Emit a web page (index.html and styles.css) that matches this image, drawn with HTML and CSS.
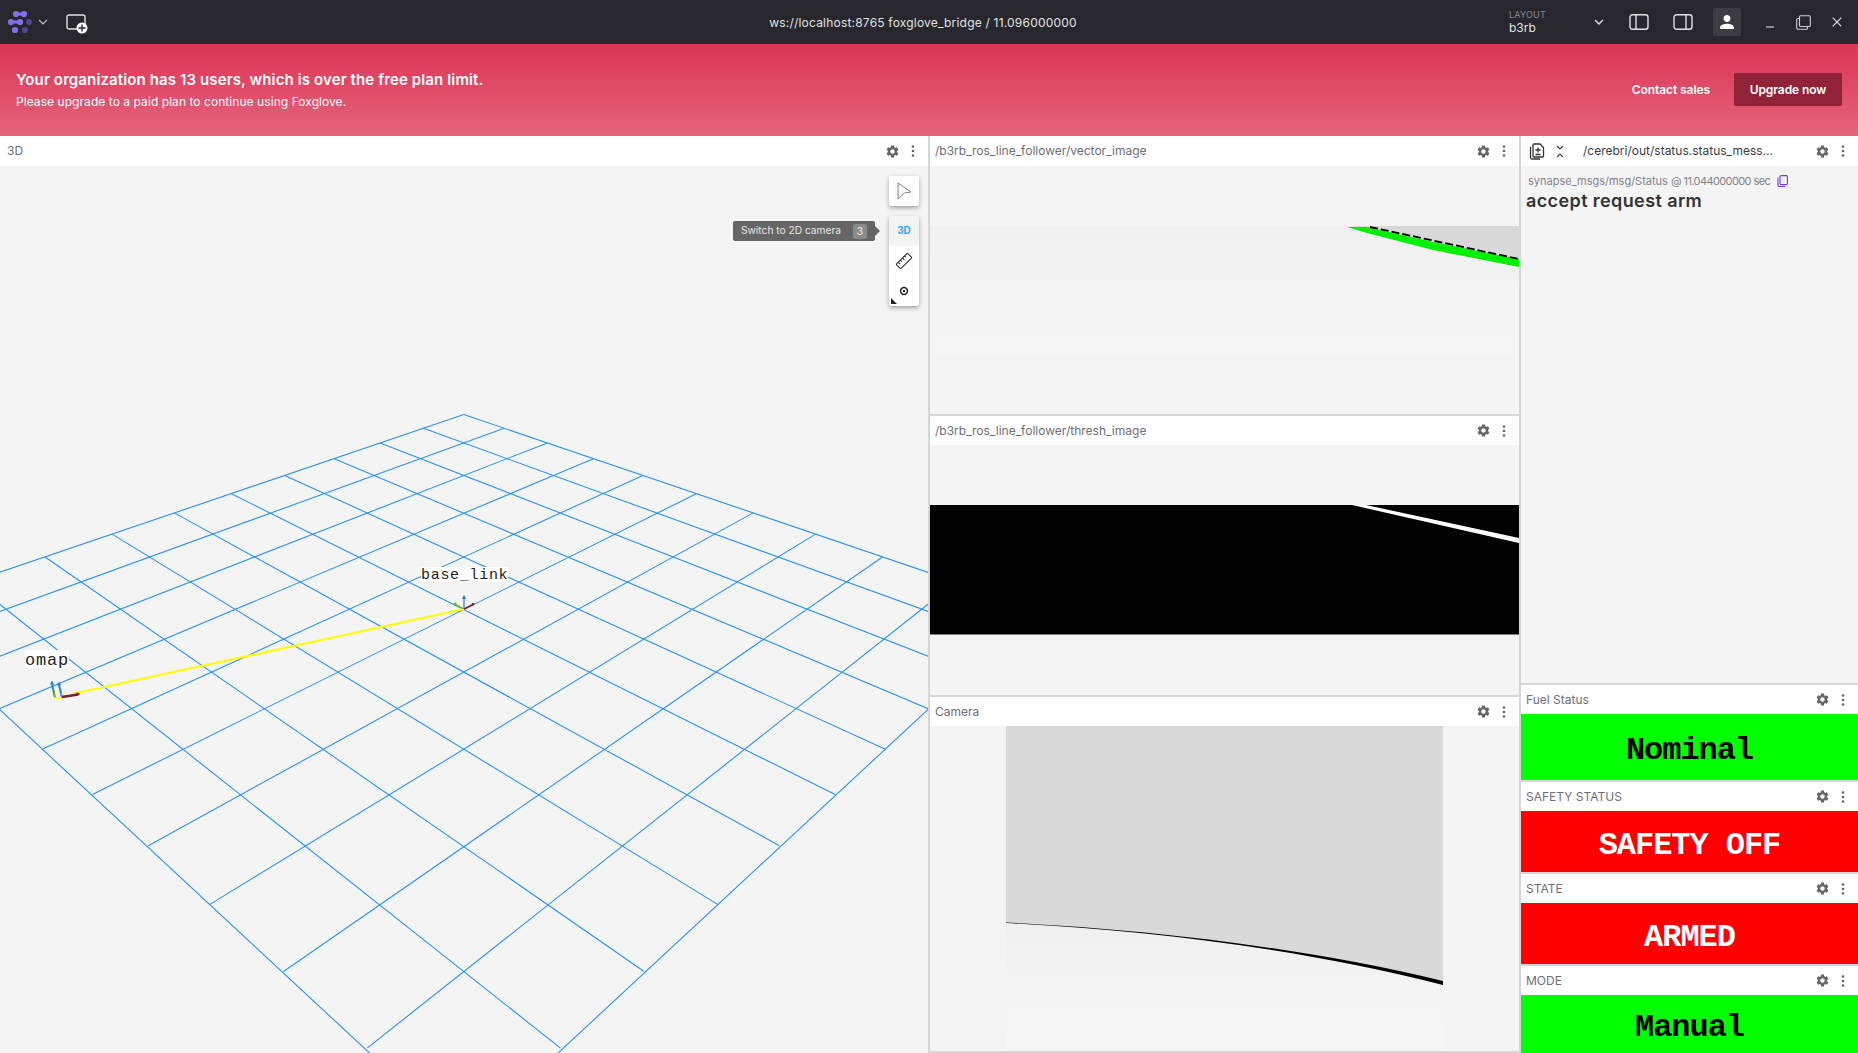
FILE: index.html
```html
<!DOCTYPE html>
<html lang="en">
<head>
  <meta charset="UTF-8">
  <meta name="viewport" content="width=device-width, initial-scale=1.0">
  <title>Foxglove</title>
  <link rel="stylesheet" href="styles.css">
</head>
<body>
  <svg class="defs" width="0" height="0">
    <symbol id="gear" viewBox="0 0 24 24">
      <path d="M19.14 12.94c.04-.3.06-.61.06-.94 0-.32-.02-.64-.07-.94l2.03-1.58c.18-.14.23-.41.12-.61l-1.92-3.32c-.12-.22-.37-.29-.59-.22l-2.39.96c-.5-.38-1.03-.7-1.62-.94l-.36-2.54c-.04-.24-.24-.41-.48-.41h-3.84c-.24 0-.43.17-.47.41l-.36 2.54c-.59.24-1.13.57-1.62.94l-2.39-.96c-.22-.08-.47 0-.59.22L2.74 8.87c-.12.21-.08.47.12.61l2.03 1.58c-.05.3-.09.63-.09.94s.02.64.07.94l-2.03 1.58c-.18.14-.23.41-.12.61l1.92 3.32c.12.22.37.29.59.22l2.39-.96c.5.38 1.03.7 1.62.94l.36 2.54c.05.24.24.41.48.41h3.84c.24 0 .44-.17.47-.41l.36-2.54c.59-.24 1.13-.56 1.62-.94l2.39.96c.22.08.47 0 .59-.22l1.92-3.32c.12-.22.07-.47-.12-.61l-2.01-1.58zM12 15.6c-1.98 0-3.6-1.62-3.6-3.6s1.62-3.6 3.6-3.6 3.6 1.62 3.6 3.6-1.62 3.6-3.6 3.6z"/>
    </symbol>
    <symbol id="dots" viewBox="0 0 4 14">
      <circle cx="2" cy="2.5" r="1.3"/><circle cx="2" cy="7" r="1.3"/><circle cx="2" cy="11.5" r="1.3"/>
    </symbol>
  </svg>

  <header class="topbar">
    <div class="topbar-left">
      <svg width="26" height="24" viewBox="0 0 26 24" class="logo">
        <path d="M9 4h8M4 12h9" stroke="#8070ee" stroke-width="3"/>
        <circle cx="9" cy="4" r="3.100" fill="#8070ee"/><circle cx="17" cy="4" r="3.100" fill="#8070ee"/>
        <circle cx="4" cy="12" r="3.100" fill="#8070ee"/><circle cx="13" cy="12" r="3.100" fill="#8070ee"/>
        <circle cx="22" cy="12" r="3" fill="#4f4694"/>
        <circle cx="8" cy="20" r="3.100" fill="#8070ee"/><circle cx="18" cy="20" r="3" fill="#4f4694"/>
      </svg>
      <svg width="10" height="6" viewBox="0 0 10 6" class="chev"><path d="M1 1l4 4 4-4" fill="none" stroke="#bbb" stroke-width="1.2"/></svg>
      <svg width="24" height="20" viewBox="0 0 24 20" class="add-panel">
        <rect x="1" y="1" width="18" height="14" rx="2" fill="none" stroke="#e2e2e2" stroke-width="1.4"/>
        <circle cx="16" cy="14" r="5.5" fill="#fff"/>
        <path d="M16 10.5v7M12.5 14h7" stroke="#27272d" stroke-width="1.4"/>
      </svg>
    </div>
    <div class="conn">ws://localhost:8765 foxglove_bridge / 11.096000000</div>
    <div class="topbar-right">
      <div class="layout-name"><span class="layout-label">LAYOUT</span><span class="layout-value">b3rb</span></div>
      <svg width="10" height="6" viewBox="0 0 10 6" class="layout-chev"><path d="M1 1l4 4 4-4" fill="none" stroke="#e2e2e2" stroke-width="1.4"/></svg>
      <svg width="20" height="16" viewBox="0 0 20 16" class="side-l"><rect x="1" y=".8" width="18" height="14.4" rx="2.5" fill="none" stroke="#e2e2e2" stroke-width="1.4"/><path d="M7 1v14" stroke="#e2e2e2" stroke-width="1.4"/></svg>
      <svg width="20" height="16" viewBox="0 0 20 16" class="side-r"><rect x="1" y=".8" width="18" height="14.4" rx="2.5" fill="none" stroke="#e2e2e2" stroke-width="1.4"/><path d="M13 1v14" stroke="#e2e2e2" stroke-width="1.4"/></svg>
      <div class="user-btn">
        <svg width="18" height="18" viewBox="0 0 24 24"><path fill="#fff" d="M12 12c2.6 0 4.6-2.1 4.6-4.6S14.600 2.800 12 2.800 7.400 4.900 7.400 7.400 9.400 12 12 12zm0 2.300c-3.100 0-9.200 1.500-9.200 4.600v2.300h18.400v-2.300c0-3.100-6.100-4.600-9.200-4.600z"/></svg>
      </div>
      <svg width="10" height="2" viewBox="0 0 10 2" class="win-min"><path d="M1 1h8" stroke="#d0d0d0" stroke-width="1.2"/></svg>
      <svg width="15" height="15" viewBox="0 0 15 15" class="win-max"><rect x="3.500" y=".7" width="10.800" height="10.800" rx="1" fill="none" stroke="#d0d0d0" stroke-width="1.100"/><path d="M3.500 3.500H2A1.300 1.300 0 0 0 .7 4.800V13A1.300 1.300 0 0 0 2 14.300h8.200a1.300 1.300 0 0 0 1.300-1.300v-1.500" fill="none" stroke="#d0d0d0" stroke-width="1.100"/></svg>
      <svg width="10" height="10" viewBox="0 0 10 10" class="win-close"><path d="M.7.7l8.600 8.600M9.300.7L.7 9.300" stroke="#e2e2e2" stroke-width="1.200"/></svg>
    </div>
  </header>

  <section class="banner">
    <div>
      <div class="banner-title">Your organization has 13 users, which is over the free plan limit.</div>
      <div class="banner-sub">Please upgrade to a paid plan to continue using Foxglove.</div>
    </div>
    <div class="banner-actions">
      <span class="contact">Contact sales</span>
      <span class="upgrade">Upgrade now</span>
    </div>
  </section>

  <main class="workspace">
    <div class="col col-3d">
      <div class="panel grow">
        <div class="panel-head tall first-head">
          <span class="panel-title">3D</span>
          <svg class="ic-gear"><use href="#gear"/></svg><svg class="ic-dots"><use href="#dots"/></svg>
        </div>
        <div class="panel-body scene">
          <svg class="grid" width="928" height="887" viewBox="0 0 928 887">
            <g transform="translate(0 234) scale(.5931 .4165)" class="grid-lines">
              <path d="M782 35L-183 502M850 68L-129 574M923 103L-69 653M1000.500 141L-1 741M1084 181L72 838M1174 225L156 947M1270 271L250 1070M1375 322L354 1211M1488 377L478 1372M1612 437L619 1556M1747 502L782 1778"/>
            </g>
            <g transform="translate(0 234) scale(.5931 .4165) translate(1564 0) scale(-1 1)" class="grid-lines">
              <path d="M782 35L-183 502M850 68L-129 574M923 103L-69 653M1000.500 141L-1 741M1084 181L72 838M1174 225L156 947M1270 271L250 1070M1375 322L354 1211M1488 377L478 1372M1612 437L619 1556M1747 502L782 1778"/>
            </g>
            <path d="M72 528L464 443" stroke="#ffff00" stroke-width="2.200"/>
            <path d="M464 443V432" stroke="#1f77d0" stroke-width="1.200"/>
            <path d="M464 443L456 438.500" stroke="#7ab800" stroke-width="1.200"/>
            <path d="M464 443L473 438.500" stroke="#7a2028" stroke-width="1.500"/>
            <path d="M464 429l-2 4h4z" fill="#1f77d0"/>
            <circle cx="455" cy="438" r="1.600" fill="#7ab800"/>
            <path d="M475 437l-3.500 .3 1.500 3z" fill="#7a2028"/>
            <path d="M55 532L52 518M62 532L59 519" stroke="#1f77d0" stroke-width="1.800"/>
            <path d="M55 532L54 524M62 532L61 524" stroke="#7ab800" stroke-width="1.200"/>
            <path d="M54 532h9" stroke="#ffff00" stroke-width="1.500"/>
            <path d="M62 531L78 528.500" stroke="#7a2028" stroke-width="2.500"/>
            <path d="M52 514.500l-2 4h4zM59 515.500l-2 4h4z" fill="#1f77d0"/>
            <path d="M80.500 528l-4-2 .5 4z" fill="#7a2028"/>
          </svg>
          <span class="frame-label label-base">base_link</span>
          <span class="frame-label label-omap">omap</span>

          <div class="tooltip"><span class="tooltip-text">Switch to 2D camera</span><kbd>3</kbd></div>
          <div class="tool-stack">
            <div class="tool-group">
              <div class="tool">
                <svg width="18" height="18" viewBox="0 0 18 18"><path d="M3 1l13 9-6.500 1-6.500 6z" fill="none" stroke="#808080" stroke-width="1"/></svg>
              </div>
            </div>
            <div class="tool-group corner">
              <div class="tool active">3D</div>
              <div class="tool">
                <svg width="18" height="18" viewBox="0 0 18 18"><g transform="rotate(-45 9 9)" fill="none" stroke="#333" stroke-width="1.100"><rect x="1" y="5.800" width="16" height="6.400" rx="1"/><path d="M4 6v2.500M7 6v2M10 6v2.500M13 6v2"/></g></svg>
              </div>
              <div class="tool">
                <svg width="10" height="10" viewBox="0 0 10 10"><circle cx="5" cy="5" r="3.400" fill="none" stroke="#222" stroke-width="1.500"/><path d="M3.800 3.800l2.400 2.400M6.200 3.800L3.800 6.200" stroke="#222" stroke-width="1"/></svg>
              </div>
            </div>
          </div>
        </div>
      </div>
    </div>

    <div class="col col-images">
      <div class="panel p-vector">
        <div class="panel-head tall">
          <span class="panel-title">/b3rb_ros_line_follower/vector_image</span>
          <svg class="ic-gear"><use href="#gear"/></svg><svg class="ic-dots"><use href="#dots"/></svg>
        </div>
        <div class="panel-body">
          <svg width="589" height="248" viewBox="0 0 589 248">
            <defs>
              <linearGradient id="fade" x1="0" y1="0" x2="0" y2="1"><stop offset="0" stop-color="#f0f0f0"/><stop offset=".5" stop-color="#f4f4f4"/><stop offset="1" stop-color="#f5f5f5"/></linearGradient>
            </defs>
            <rect y="60" width="589" height="130" fill="url(#fade)"/>
            <path d="M417 60H589V93z" fill="#d8d8d8"/>
            <path d="M417 61H437L503 76L589 93V101L503 84L437 67z" fill="#00f000"/>
            <path d="M440 61L589 93" stroke="#000" stroke-width="1.800" stroke-dasharray="8 3"/>
          </svg>
        </div>
      </div>
      <div class="panel p-thresh">
        <div class="panel-head">
          <span class="panel-title">/b3rb_ros_line_follower/thresh_image</span>
          <svg class="ic-gear"><use href="#gear"/></svg><svg class="ic-dots"><use href="#dots"/></svg>
        </div>
        <div class="panel-body">
          <svg width="589" height="250" viewBox="0 0 589 250">
            <rect y="60" width="589" height="129.500" fill="#000"/>
            <path d="M436 60L589 93V98L422 60z" fill="#fff"/>
          </svg>
        </div>
      </div>
      <div class="panel grow last">
        <div class="panel-head">
          <span class="panel-title">Camera</span>
          <svg class="ic-gear"><use href="#gear"/></svg><svg class="ic-dots"><use href="#dots"/></svg>
        </div>
        <div class="panel-body center-img">
          <svg width="437" height="325" viewBox="0 0 437 325">
            <defs>
              <linearGradient id="fade2" x1="0" y1="0" x2="0" y2="1"><stop offset="0" stop-color="#efefef"/><stop offset=".5" stop-color="#f4f4f4"/><stop offset="1" stop-color="#f6f6f6"/></linearGradient>
            </defs>
            <rect y="195" width="437" height="130" fill="url(#fade2)"/>
            <path d="M0 0H437V256C300 222 150 204 0 197z" fill="#d9d9d9"/>
            <path d="M0 196.500C150 204 300 222 437 255V259C300 224 150 204.500 0 197z" fill="#000"/>
          </svg>
        </div>
      </div>
    </div>

    <div class="col col-status">
      <div class="panel grow">
        <div class="panel-head tall">
          <svg width="16" height="17" viewBox="0 0 16 17" class="ic-doc"><path d="M5 1h6l3.500 3.500V13a1 1 0 0 1-1 1H5a1 1 0 0 1-1-1V2a1 1 0 0 1 1-1zM1.500 4v10.500a1.500 1.500 0 0 0 1.500 1.500h8M9 4.500v5M6.500 7h5M6.500 11.500h5" fill="none" stroke="#333" stroke-width="1.300"/></svg>
          <svg width="8" height="13" viewBox="0 0 8 13" class="ic-collapse"><path d="M1 1l3 3 3-3M1 12l3-3 3 3" fill="none" stroke="#444" stroke-width="1.200"/></svg>
          <span class="panel-title path">/cerebri/out/status.status_mess...</span>
          <svg class="ic-gear"><use href="#gear"/></svg><svg class="ic-dots"><use href="#dots"/></svg>
        </div>
        <div class="panel-body status-body">
          <div class="msg-meta"><span>synapse_msgs/msg/Status <span class="msg-stamp">@ 11.044000000 sec</span></span>
            <svg width="11" height="12" viewBox="0 0 11 12"><rect x="3" y=".6" width="7.400" height="9" rx="1.200" fill="none" stroke="#6f3be8" stroke-width="1.100"/><path d="M1 2.500V10a1.500 1.500 0 0 0 1.500 1.500H8" fill="none" stroke="#6f3be8" stroke-width="1.100"/></svg>
          </div>
          <div class="msg-text">accept request arm</div>
        </div>
      </div>
      <div class="panel p-fuel">
        <div class="panel-head">
          <span class="panel-title">Fuel Status</span>
          <svg class="ic-gear"><use href="#gear"/></svg><svg class="ic-dots"><use href="#dots"/></svg>
        </div>
        <div class="panel-body indicator ok">Nominal</div>
      </div>
      <div class="panel p-ind">
        <div class="panel-head">
          <span class="panel-title">SAFETY STATUS</span>
          <svg class="ic-gear"><use href="#gear"/></svg><svg class="ic-dots"><use href="#dots"/></svg>
        </div>
        <div class="panel-body indicator bad">SAFETY OFF</div>
      </div>
      <div class="panel p-ind">
        <div class="panel-head">
          <span class="panel-title">STATE</span>
          <svg class="ic-gear"><use href="#gear"/></svg><svg class="ic-dots"><use href="#dots"/></svg>
        </div>
        <div class="panel-body indicator bad">ARMED</div>
      </div>
      <div class="panel grow last-status">
        <div class="panel-head">
          <span class="panel-title">MODE</span>
          <svg class="ic-gear"><use href="#gear"/></svg><svg class="ic-dots"><use href="#dots"/></svg>
        </div>
        <div class="panel-body indicator ok">Manual</div>
      </div>
    </div>
  </main>
</body>
</html>
```

FILE: styles.css
```css
* {
  box-sizing: border-box;
}
html, body {
  height: 100%;
}
body {
  margin: 0;
  display: flex;
  flex-direction: column;
  overflow: hidden;
  font-family: Inter, "Liberation Sans", sans-serif;
  background-color: #f4f4f4;
  color: #333;
}
svg {
  display: block;
  flex: none;
}
.defs {
  position: absolute;
}

/* top bar */
.topbar {
  height: 44px;
  flex: none;
  display: grid;
  grid-template-columns: 1fr auto 1fr;
  align-items: center;
  background-color: #27272d;
  color: #e2e2e2;
}
.topbar-left {
  display: flex;
  align-items: center;
  padding-left: 7px;
}
.chev {
  margin-left: 5px;
}
.add-panel {
  margin: 4px 0 0 18px;
}
.conn {
  font-size: 12px;
  letter-spacing: .2px;
  margin-right: 12px;
}
.topbar-right {
  display: flex;
  align-items: center;
  justify-content: flex-end;
}
.layout-name {
  display: flex;
  flex-direction: column;
  width: 85px;
}
.layout-label {
  font-size: 9px;
  letter-spacing: .2px;
  color: #8a8a90;
  line-height: 11px;
}
.layout-value {
  font-size: 12px;
  line-height: 15px;
}
.side-l {
  margin-left: 25px;
}
.side-r {
  margin-left: 24px;
}
.user-btn {
  width: 28px;
  height: 28px;
  margin-left: 20px;
  border-radius: 2px;
  background-color: #3c3c42;
  display: flex;
  align-items: center;
  justify-content: center;
}
.win-min {
  margin: 10px 0 0 24px;
}
.win-max {
  margin-left: 21px;
}
.win-close {
  margin: 0 16px 0 21px;
}

/* upgrade banner */
.banner {
  height: 92px;
  flex: none;
  display: flex;
  align-items: center;
  justify-content: space-between;
  padding: 0 16px;
  color: #fff;
  background: linear-gradient(#dc3556, #e4637b);
}
.banner-title {
  font-size: 15px;
  font-weight: 600;
  letter-spacing: .12px;
  line-height: 22px;
}
.banner-sub {
  font-size: 12px;
  letter-spacing: .06px;
  line-height: 18px;
  margin-top: 2px;
}
.banner-actions {
  display: flex;
  align-items: center;
  gap: 24px;
  font-size: 12px;
  font-weight: 600;
  letter-spacing: -.08px;
  margin-bottom: 2px;
}
.upgrade {
  width: 108px;
  height: 33px;
  line-height: 33px;
  text-align: center;
  border-radius: 2px;
  background-color: #922237;
}

/* panels */
.workspace {
  flex: 1;
  display: flex;
  min-height: 0;
}
.col {
  display: flex;
  flex-direction: column;
}
.col-3d {
  width: 930px;
  border-right: 2px solid #d6d6d6;
}
.col-images {
  width: 591px;
  border-right: 2px solid #d6d6d6;
}
.col-status {
  flex: 1;
}
.panel {
  display: flex;
  flex-direction: column;
  border-bottom: 2px solid #d6d6d6;
}
.grow {
  flex: 1;
  min-height: 0;
}
.col-3d .panel,
.last-status {
  border-bottom: 0;
}
.p-vector {
  height: 280px;
}
.p-thresh {
  height: 281px;
}
.p-fuel {
  height: 97px;
}
.p-ind {
  height: 92px;
}
.col-status .panel:first-child {
  flex: none;
  height: 549px;
}
.panel-head {
  height: 29px;
  flex: none;
  display: flex;
  align-items: center;
  padding: 0 13px 0 5px;
  background-color: #fff;
}
.panel-head.tall {
  height: 30px;
}
.first-head {
  padding-left: 7px;
}
.panel-title {
  flex: 1;
  font-size: 12px;
  color: #6f6e78;
  white-space: nowrap;
  overflow: hidden;
  padding-bottom: 1px;
}
.tall .panel-title {
  padding-bottom: 2px;
}
.panel-title.path {
  color: #3d3d42;
  margin-left: 19px;
}
.ic-gear {
  width: 15px;
  height: 15px;
  fill: #666;
}
.ic-dots {
  width: 4px;
  height: 14px;
  margin-left: 11px;
  fill: #666;
}
.ic-doc {
  margin-left: 3px;
}
.ic-collapse {
  margin-left: 11px;
}
.panel-body {
  flex: 1;
  min-height: 0;
  position: relative;
  background-color: #f4f4f4;
}
.center-img {
  display: flex;
  justify-content: center;
}

/* 3D panel */
.scene {
  overflow: hidden;
}
.grid {
  position: absolute;
  left: 0;
  top: 0;
}
.grid-lines {
  fill: none;
  stroke: #2a92fb;
}
.grid-lines path {
  stroke-width: 1.1;
  vector-effect: non-scaling-stroke;
}
.frame-label {
  position: absolute;
  background-color: #fff;
  color: #222;
  font-family: "Liberation Mono", monospace;
  white-space: nowrap;
}
.label-base {
  left: 421px;
  top: 401px;
  height: 15px;
  line-height: 17px;
  font-size: 15px;
  letter-spacing: .7px;
}
.label-omap {
  left: 25px;
  top: 484px;
  height: 18px;
  line-height: 21px;
  font-size: 17px;
  letter-spacing: .8px;
}
.tooltip {
  position: absolute;
  left: 733px;
  top: 55px;
  width: 142px;
  height: 20px;
  display: flex;
  align-items: center;
  justify-content: space-between;
  padding: 0 8px;
  border-radius: 2px;
  background-color: #666;
  color: #e6e6e6;
}
.tooltip::after {
  content: "";
  position: absolute;
  left: 142px;
  top: 5px;
  border-left: 5px solid #666;
  border-top: 5px solid transparent;
  border-bottom: 5px solid transparent;
}
.tooltip-text {
  font-size: 10.2px;
  padding-bottom: 2px;
}
.tooltip kbd {
  width: 14px;
  height: 15px;
  line-height: 15px;
  text-align: center;
  border-radius: 2px;
  background-color: #8a8a8a;
  font-family: inherit;
  font-size: 11px;
}
.tool-stack {
  position: absolute;
  left: 889px;
  top: 10px;
  width: 30px;
  display: flex;
  flex-direction: column;
  gap: 10px;
}
.tool-group {
  position: relative;
  background-color: #fff;
  border-radius: 2px;
  box-shadow: 0 2px 4px rgba(0, 0, 0, .35);
}
.tool {
  height: 30px;
  display: flex;
  align-items: center;
  justify-content: center;
}
.tool.active {
  background-color: #f4f4f4;
  color: #33a5ff;
  font-size: 10px;
  font-weight: 700;
  padding-bottom: 2px;
}
.corner::after {
  content: "";
  position: absolute;
  left: 2px;
  bottom: 2px;
  border-left: 6px solid #222;
  border-top: 6px solid transparent;
}

/* raw message panel */
.status-body {
  padding: 7px 5px;
}
.msg-meta {
  display: flex;
  align-items: center;
  gap: 7px;
  padding-left: 2px;
  font-size: 11px;
  line-height: 16px;
  color: #84838c;
}
.msg-stamp {
  letter-spacing: -.6px;
}
.msg-text {
  font-size: 18px;
  font-weight: 600;
  letter-spacing: .4px;
  line-height: 24px;
  color: #333;
}

/* indicator panels */
.indicator {
  display: flex;
  align-items: center;
  justify-content: center;
  padding-top: 7px;
  font-family: "Liberation Mono", monospace;
  font-size: 32px;
  font-weight: 700;
  letter-spacing: -1.05px;
  white-space: pre;
}
.ok {
  background-color: #00ff00;
  color: #000;
}
.bad {
  background-color: #ff0000;
  color: #fff;
}
```
